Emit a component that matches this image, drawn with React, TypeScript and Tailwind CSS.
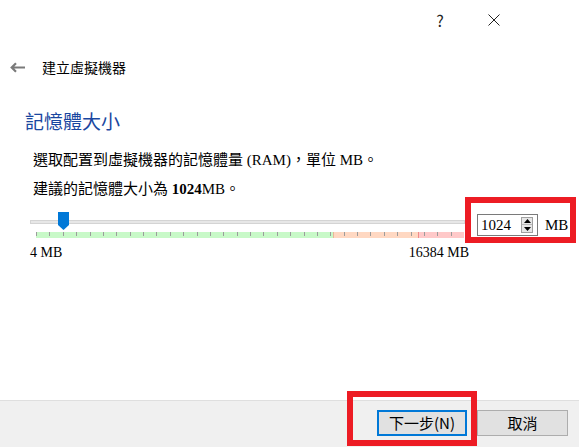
import React from "react";

const serif = "font-['Liberation_Serif','Noto_Sans_CJK_TC',serif]";
const sans = "font-['Noto_Sans_CJK_TC','Noto_Sans',sans-serif]";

function Ticks() {
  const xs: number[] = [];
  for (let k = 0; k <= 32; k++) xs.push(Math.round(k * 13.375) + 0.5);
  return (
    <svg width="428" height="6" className="absolute left-0 top-0">
      {xs.map((x, i) => (
        <line key={i} x1={x} y1={0} x2={x} y2={4} stroke="#9c9c9c" strokeWidth="1" />
      ))}
    </svg>
  );
}

export default function App() {
  return (
    <div className="relative w-[579px] h-[447px] bg-white flex flex-col overflow-hidden">
      {/* title bar buttons */}
      <div className="h-[40px] flex justify-end items-center pr-[62px] gap-2">
        <div className={`w-[46px] h-[40px] flex items-center justify-center text-[16px] text-[#222] ${sans}`}>?</div>
        <div className="w-[46px] h-[40px] flex items-center justify-center">
          <svg width="12" height="12" viewBox="0 0 12 12">
            <path d="M0.5 0.5 L11.5 11.5 M11.5 0.5 L0.5 11.5" stroke="#222" strokeWidth="1" fill="none" />
          </svg>
        </div>
      </div>

      {/* header row */}
      <div className="mt-[17px] h-[20px] flex items-center pl-[10px]">
        <svg width="15" height="11" viewBox="0 0 15 11">
          <path d="M2 5.5 H15 M6 1.2 L1.7 5.5 L6 9.8" stroke="#7a7a7a" strokeWidth="2.2" fill="none" />
        </svg>
        <span className={`ml-[17px] text-[14px] leading-[20px] text-black ${sans}`}>建立虛擬機器</span>
      </div>

      {/* heading */}
      <div className={`mt-[32px] h-[24px] leading-[24px] pl-[25px] text-[19px] text-[#1a47a0] ${sans}`}>記憶體大小</div>

      {/* body text */}
      <div className={`mt-[17px] pl-[33px] text-[15px] leading-[20px] text-black ${serif}`}>
        選取配置到虛擬機器的記憶體量 (RAM)，單位 MB。
      </div>
      <div className={`mt-[9px] pl-[33px] text-[15px] leading-[20px] text-black ${serif}`}>
        建議的記憶體大小為 <b>1024</b>MB。
      </div>

      {/* slider row */}
      <div className="mt-[13px] flex pl-[30px]">
        <div className="w-[435px] flex flex-col">
          <div className="relative h-[20px]">
            <div className="absolute left-0 right-0 top-[8px] h-[4px] bg-[#e7e7e7] border border-[#d4d4d4]" />
            <svg width="11" height="18" viewBox="0 0 11 18" className="absolute left-[28px] top-0">
              <path d="M0 0 H11 V13 L5.5 18 L0 13 Z" fill="#0078d7" />
            </svg>
          </div>
          <div className="relative ml-[6px] w-[428px] h-[6px] flex">
            <div className="w-[297px] bg-[#c8f9c8]" />
            <div className="w-[85px] bg-[#ffd8c2] border-l border-[#e8b89a]" />
            <div className="flex-1 bg-[#ffc9c9] border-l border-[#f08a8a]" />
            <Ticks />
          </div>
          <div className={`mt-[5px] w-[439px] h-[20px] flex justify-between text-[14px] leading-[20px] text-black ${serif}`}>
            <span>4 MB</span>
            <span>16384 MB</span>
          </div>
        </div>
        <div className="ml-[12px] mt-[2px] flex items-start">
          <div className="w-[61px] h-[22px] border border-[#7a7a7a] bg-white flex items-center justify-between">
            <span className={`pl-[3px] text-[15px] leading-[20px] text-black ${serif}`}>1024</span>
            <div className="mr-[4px] w-[12px] h-[16px] border border-[#a0a0a0] bg-[#e6e6e6] flex flex-col">
              <div className="h-[7px] flex items-center justify-center border-b border-[#b8b8b8]">
                <svg width="7" height="4" viewBox="0 0 7 4"><path d="M3.5 0 L7 4 H0 Z" fill="#000" /></svg>
              </div>
              <div className="flex-1 flex items-center justify-center">
                <svg width="7" height="4" viewBox="0 0 7 4"><path d="M0 0 H7 L3.5 4 Z" fill="#000" /></svg>
              </div>
            </div>
          </div>
          <span className={`ml-[7px] text-[15px] leading-[22px] text-black ${serif}`}>MB</span>
        </div>
      </div>

      {/* footer */}
      <div className="mt-auto h-[47px] bg-[#f0f0f0] border-t border-[#dfdfdf] flex justify-end items-start pt-[9px] pr-[11px] gap-[10px]">
        <div className={`w-[90px] h-[26px] border-2 border-[#0078d7] bg-[#e1e1e1] flex items-center justify-center text-[15px] text-black ${sans}`}>
          下一步(N)
        </div>
        <div className={`w-[91px] h-[26px] border border-[#adadad] bg-[#e1e1e1] flex items-center justify-center text-[15px] text-black ${sans}`}>
          取消
        </div>
      </div>

      {/* annotation boxes */}
      <div className="absolute left-[465px] top-[197px] w-[111px] h-[46px] border-[6px] border-[#ed1c24]" />
      <div className="absolute left-[347px] top-[391px] w-[130px] h-[55px] border-[6px] border-[#ed1c24]" />
    </div>
  );
}
